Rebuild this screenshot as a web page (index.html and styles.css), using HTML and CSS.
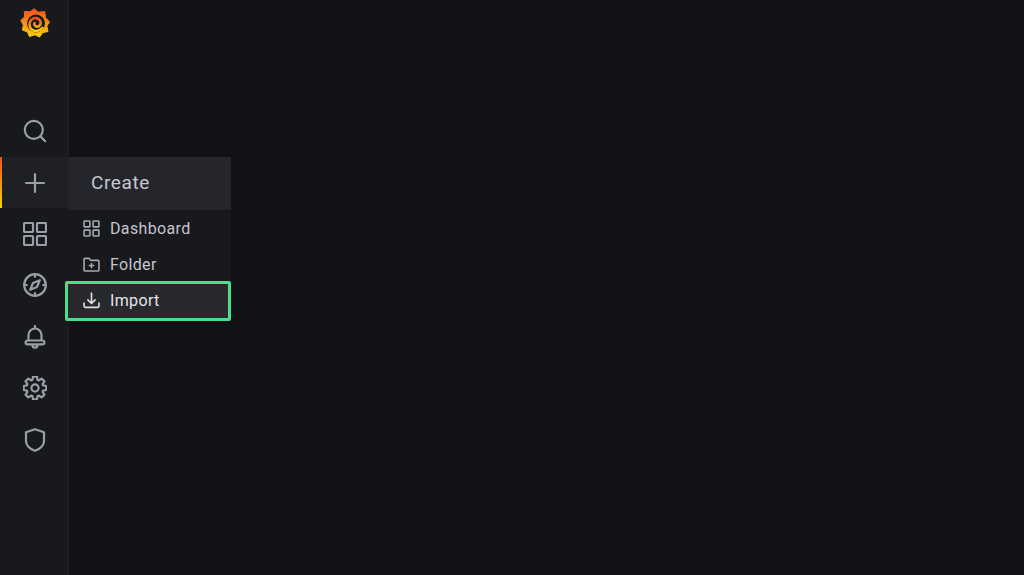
FILE: index.html
```html
<!DOCTYPE html>
<html lang="en">
<head>
    <meta charset="UTF-8">
    <title>Grafana</title>
    <link rel="stylesheet" href="styles.css">
</head>
<body>
    <nav class="sidemenu">
        <a class="logo">
            <svg viewBox="0 0 30 30" width="30" height="32">
                <defs>
                    <linearGradient id="flame" x1="0" y1="1" x2="0" y2="0">
                        <stop offset="0" stop-color="#fcd20c"/>
                        <stop offset="1" stop-color="#f0501f"/>
                    </linearGradient>
                </defs>
                <path fill="url(#flame)" stroke="url(#flame)" stroke-width="1" stroke-linejoin="round" d="M14 .8L18.500 4.200 24.800 3.600 25.400 9.500 29.500 14 26.800 18 28 23.500 22.700 24.600 19.500 29 15 26.800 9.500 28.500 7.500 24 2.400 22 3.400 17.100.7 12.400 4.600 9 4.300 3.400 10.200 3.700z"/>
                <circle cx="16" cy="15.500" r="9" fill="#18191d"/>
                <path fill="none" stroke="url(#flame)" stroke-width="2.600" stroke-linecap="round" d="M22.500 19.800c-2.800 3.800-7.800 4.200-10.800 1.600-3-2.600-3-7.200-.2-9.800 2.900-2.600 7.400-1.800 8.800 1.400 1.300 2.900-.8 5.800-3.400 5.600-1.900-.1-3.100-2-2.400-3.600"/>
            </svg>
        </a>
        <a class="item">
            <svg class="icon" viewBox="0 0 24 24"><circle cx="10.800" cy="10.800" r="9"/><path d="M17.400 17.400l4.800 4.800"/></svg>
        </a>
        <a class="item active">
            <svg class="icon" viewBox="0 0 24 24"><path d="M12 3v18M3 12h18"/></svg>
        </a>
        <a class="item">
            <svg class="icon" viewBox="0 0 24 24"><rect x="1" y="1" width="9" height="9" rx=".8"/><rect x="14" y="1" width="9" height="9" rx=".8"/><rect x="1" y="14" width="9" height="9" rx=".8"/><rect x="14" y="14" width="9" height="9" rx=".8"/></svg>
        </a>
        <a class="item">
            <svg class="icon" viewBox="0 0 24 24"><circle cx="12" cy="12" r="10.800"/><path d="M12 1.200v2.600M12 20.200v2.600M1.200 12h2.600M20.200 12h2.600"/><path d="M16.800 7.200l-2.800 6.800-6.800 2.800 2.800-6.800z"/></svg>
        </a>
        <a class="item">
            <svg class="icon" viewBox="0 0 24 24"><path d="M12 1v2.500M5.500 15V10a6.500 6.500 0 0 1 13 0v5M4.500 15.500h15a1.900 1.900 0 0 1 0 3.800h-15a1.900 1.900 0 0 1 0-3.800zM9.500 19.500v.7a2.500 2.500 0 0 0 5 0v-.7"/></svg>
        </a>
        <a class="item">
            <svg class="icon" viewBox="0 0 24 24"><circle cx="12" cy="12" r="3.600"/><path d="M9.370 3.920L10 .67h4l.63 3.250 1.230.51 2.740-1.850 2.820 2.820-1.850 2.740.51 1.230 3.250.63v4l-3.250.63-.51 1.230 1.850 2.740-2.820 2.820-2.740-1.850-1.230.51L14 23.330h-4l-.63-3.250-1.230-.51-2.740 1.850-2.820-2.820 1.850-2.740-.51-1.230L.67 14v-4l3.250-.63.51-1.230L2.580 5.400 5.400 2.580l2.740 1.850z"/></svg>
        </a>
        <a class="item">
            <svg class="icon" viewBox="0 0 24 24"><path d="M12 1.200l9 3v8.500c0 4.600-3.800 8.200-9 10.100-5.200-1.900-9-5.500-9-10.100V4.200z"/></svg>
        </a>
    </nav>

    <div class="dropdown">
        <div class="dropdown-title">Create</div>
        <ul class="dropdown-list">
            <li class="dropdown-item">
                <svg class="small-icon" viewBox="0 0 16 16"><rect x="1" y="1" width="5.500" height="5.500" rx=".6"/><rect x="9.500" y="1" width="5.500" height="5.500" rx=".6"/><rect x="1" y="9.500" width="5.500" height="5.500" rx=".6"/><rect x="9.500" y="9.500" width="5.500" height="5.500" rx=".6"/></svg>
                Dashboard
            </li>
            <li class="dropdown-item">
                <svg class="small-icon" viewBox="0 0 16 16"><path d="M1 3.200a1 1 0 0 1 1-1h3.600l1.600 1.900H14a1 1 0 0 1 1 1v8a1 1 0 0 1-1 1H2a1 1 0 0 1-1-1zM8 7v4M6 9h4"/></svg>
                Folder
            </li>
            <li class="dropdown-item highlighted">
                <svg class="small-icon" viewBox="0 0 16 16"><path d="M8 1v9.500M4.600 7.400L8 10.800l3.400-3.400M1 10.500v2.700a1.300 1.300 0 0 0 1.300 1.300h11.400a1.300 1.300 0 0 0 1.300-1.300v-2.700"/></svg>
                Import
            </li>
        </ul>
    </div>
</body>
</html>
```

FILE: styles.css
```css
html, body {
    height: 100%;
}

body {
    font-family: Roboto, "Liberation Sans", sans-serif;
    margin: 0;
    background-color: #111216;
    color: #ccccdc;
    overflow: hidden;
}

.sidemenu {
    width: 68px;
    height: 100%;
    background-color: #18191d;
    border-right: 1px solid #1e1f23;
}

.logo {
    display: flex;
    justify-content: center;
    height: 105.600px;
    padding-top: 7px;
    padding-left: 1px;
    box-sizing: border-box;
}

.item {
    display: flex;
    align-items: center;
    justify-content: center;
    height: 51.400px;
    padding-left: 2px;
    box-sizing: border-box;
    position: relative;
}

.item.active {
    background-color: #1f2024;
}

.item.active::before {
    content: "";
    position: absolute;
    left: 0;
    top: 0;
    bottom: 0;
    width: 2px;
    background: linear-gradient(#f0501f, #fcd20c);
}

.icon {
    width: 24px;
    height: 24px;
    fill: none;
    stroke: #9b9da7;
    stroke-width: 2.200;
    stroke-linejoin: round;
    stroke-linecap: round;
}

.dropdown {
    position: absolute;
    left: 68px;
    top: 157px;
    width: 163px;
    background-color: #18191d;
}

.dropdown-title {
    height: 53px;
    line-height: 52px;
    padding-left: 23px;
    background-color: #25262b;
    font-size: 19px;
    letter-spacing: .6px;
    color: #c6c7d0;
}

.dropdown-list {
    list-style: none;
    margin: 0;
    padding: 0;
}

.dropdown-item {
    display: flex;
    align-items: center;
    gap: 10px;
    height: 36px;
    padding-left: 15px;
    font-size: 16px;
    letter-spacing: .35px;
    color: #c4c5cf;
}

.small-icon {
    width: 17px;
    height: 17px;
    flex-shrink: 0;
    fill: none;
    stroke: #a6a8b2;
    stroke-width: 1.500;
    stroke-linejoin: round;
    stroke-linecap: round;
}

.highlighted {
    position: relative;
    left: -3px;
    width: 166px;
    height: 40px;
    box-sizing: border-box;
    margin-top: -1px;
    padding-left: 15px;
    padding-bottom: 2px;
    background-color: #27292d;
    border: 3px solid #4bdc8e;
    border-radius: 2px;
    color: #e6e6ea;
}

.highlighted .small-icon {
    stroke: #e0e0e6;
}
```
